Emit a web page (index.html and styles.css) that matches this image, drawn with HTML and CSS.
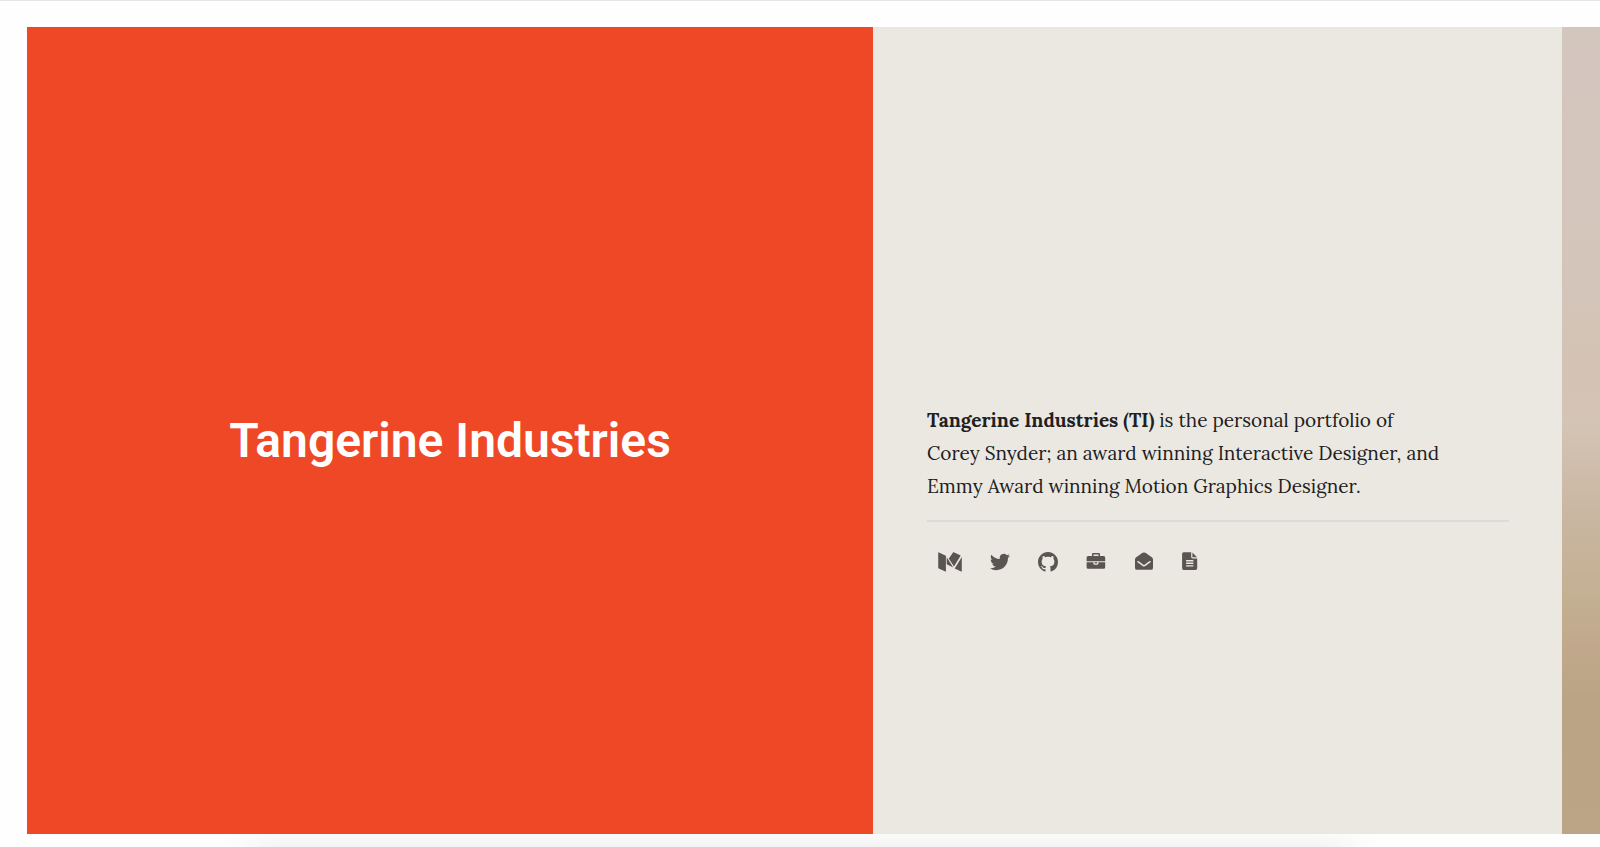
FILE: index.html
```html
<!DOCTYPE html>
<html lang="en">
<head>
<meta charset="utf-8">
<title>Tangerine Industries</title>
<link rel="stylesheet" href="styles.css">
</head>
<body>
<main class="panels">
  <section class="panel brand">
    <h1 class="brand-title">Tangerine Industries</h1>
  </section>
  <section class="panel about">
    <div class="about-body">
      <p class="intro"><strong>Tangerine Industries (TI)</strong> is the personal portfolio of<br>Corey Snyder; an award winning Interactive Designer, and<br>Emmy Award winning Motion Graphics Designer.</p>
      <nav class="links" aria-label="Profiles">
        <a class="link" href="#medium" aria-label="Medium"><svg width="24" height="20" viewBox="0 0 24 20"><path d="M.4.2 7.9 3.7V19.8L.7 16.4Q.2 16.1.2 15.5V.5Q.2.1.4.2ZM8.7 5.2 15.2 15.4 8.7 12.3ZM11.6 5.4 15 .4Q15.3 0 15.8.2L22.7 3.6 16 14.4 10.6 6.2ZM23.8 4.9V19.2Q23.8 19.9 23.1 19.6L16.7 16.4Z"/></svg></a>
        <a class="link" href="#twitter" aria-label="Twitter"><svg width="20" height="20" viewBox="0 0 24 24"><path d="M23.953 4.57a10 10 0 01-2.825.775 4.958 4.958 0 002.163-2.723c-.951.555-2.005.959-3.127 1.184a4.92 4.92 0 00-8.384 4.482C7.69 8.095 4.067 6.13 1.64 3.162a4.822 4.822 0 00-.666 2.475c0 1.71.87 3.213 2.188 4.096a4.904 4.904 0 01-2.228-.616v.06a4.923 4.923 0 003.946 4.827 4.996 4.996 0 01-2.212.085 4.936 4.936 0 004.604 3.417 9.867 9.867 0 01-6.102 2.105c-.39 0-.779-.023-1.17-.067a13.995 13.995 0 007.557 2.209c9.053 0 13.998-7.496 13.998-13.985 0-.21 0-.42-.015-.63A9.935 9.935 0 0024 4.59z"/></svg></a>
        <a class="link" href="#github" aria-label="GitHub"><svg width="20" height="20" viewBox="0 0 16 16"><path d="M8 0C3.58 0 0 3.58 0 8c0 3.54 2.29 6.53 5.47 7.59.4.07.55-.17.55-.38 0-.19-.01-.82-.01-1.49-2.01.37-2.53-.49-2.69-.94-.09-.23-.48-.94-.82-1.13-.28-.15-.68-.52-.01-.53.63-.01 1.08.58 1.23.82.72 1.21 1.87.87 2.33.66.07-.52.28-.87.51-1.07-1.78-.2-3.64-.89-3.64-3.95 0-.87.31-1.59.82-2.15-.08-.2-.36-1.02.08-2.12 0 0 .67-.21 2.2.82.64-.18 1.32-.27 2-.27s1.36.09 2 .27c1.53-1.04 2.2-.82 2.2-.82.44 1.1.16 1.92.08 2.12.51.56.82 1.27.82 2.15 0 3.07-1.87 3.75-3.65 3.95.29.25.54.73.54 1.48 0 1.07-.01 1.93-.01 2.2 0 .21.15.46.55.38A8.01 8.01 0 0016 8c0-4.42-3.58-8-8-8z"/></svg></a>
        <a class="link" href="#work" aria-label="Work"><svg width="20" height="20" viewBox="0 0 20 20"><path fill-rule="evenodd" d="M6 4V2.2Q6 .9 7.3.9H12.7Q14 .9 14 2.2V4H17.6Q19.2 4 19.2 5.6V9.2H.6V5.6Q.6 4 2.2 4ZM7.5 4H12.5V2.4H7.5ZM.6 10.3H7.4V11.4Q7.4 12.8 8.8 12.8H11Q12.4 12.8 12.4 11.4V10.3H19.2V15.2Q19.2 16.8 17.6 16.8H2.2Q.6 16.8.6 15.2ZM8.6 10.3H11.2V11.6H8.6Z"/></svg></a>
        <a class="link" href="#email" aria-label="Email"><svg width="20" height="20" viewBox="0 0 20 20"><path d="M8.6.8Q10 0 11.4.8L17.8 5.2Q19 6 19 7.2V15.9Q19 17.8 17.1 17.8H2.9Q1 17.8 1 15.9V7.2Q1 6 2.2 5.2Z"/><path class="fold" d="M4 9.7 9 13.3Q10 14 11 13.3L16 9.7"/></svg></a>
        <a class="link" href="#resume" aria-label="Résumé"><svg width="16" height="20" viewBox="0 0 16 20"><path fill-rule="evenodd" d="M1.6.3H9.2V5Q9.2 6.4 10.6 6.4H15.2V16.3Q15.2 17.9 13.6 17.9H1.6Q.1 17.9.1 16.3V1.8Q.1.3 1.6.3ZM10.4.6 15 5.2H10.4ZM4.1 8V9.4H11.4V8ZM4.1 10.6V12H11.4V10.6ZM4.1 13.2V14.6H11.4V13.2Z"/></svg></a>
      </nav>
    </div>
  </section>
  <section class="panel showcase" aria-label="Showcase"></section>
</main>
<div class="page-end"></div>
</body>
</html>
```

FILE: styles.css
```css
* {
  box-sizing: border-box;
}

body {
  margin: 0;
  min-height: 100vh;
  display: flex;
  flex-direction: column;
  background: #fefefe;
  border-top: 1px solid #e6e6e6;
  overflow-x: hidden;
}

.panels {
  flex: 1;
  display: grid;
  grid-template-columns: 846fr 689fr 38fr;
  padding: 26px 0 0 27px;
}

.panel {
  display: flex;
  align-items: center;
}

.brand {
  justify-content: center;
  padding-top: 20px;
  background: #ef4826;
}

.brand-title {
  margin: 0;
  color: #fff;
  font: 600 48px/60px Roboto, sans-serif;
}

.about {
  padding: 114px 53px 0 54px;
  background: #ebe8e1;
}

.about-body {
  flex: 1;
}

.intro {
  margin: 0;
  padding-bottom: 17px;
  border-bottom: 2px solid #dcdbd7;
  color: #20201e;
  font: 19px/33px Lora, "Liberation Serif", serif;
}

.links {
  display: flex;
  gap: 28px;
  padding: 30px 0 0 11px;
}

.link {
  display: flex;
  color: #5a5551;
}

.link svg {
  fill: currentColor;
}

.link .fold {
  fill: none;
  stroke: #ebe8e1;
  stroke-width: 1.5;
  stroke-linecap: round;
}

.showcase {
  background: linear-gradient(#d3c6be 0%, #d3c5ba 32%, #d4c3b4 42%, #d4c4b5 49%, #cab7a2 60%, #c4b093 70%, #c1a88c 77%, #bba485 83%, #bca586 100%);
}

.page-end {
  height: 13px;
  overflow: hidden;
}

.page-end::before {
  content: "";
  display: block;
  height: 40px;
  margin: 24px 250px 0;
  box-shadow: 0 0 44px rgba(0, 0, 0, 0.15);
}
```
